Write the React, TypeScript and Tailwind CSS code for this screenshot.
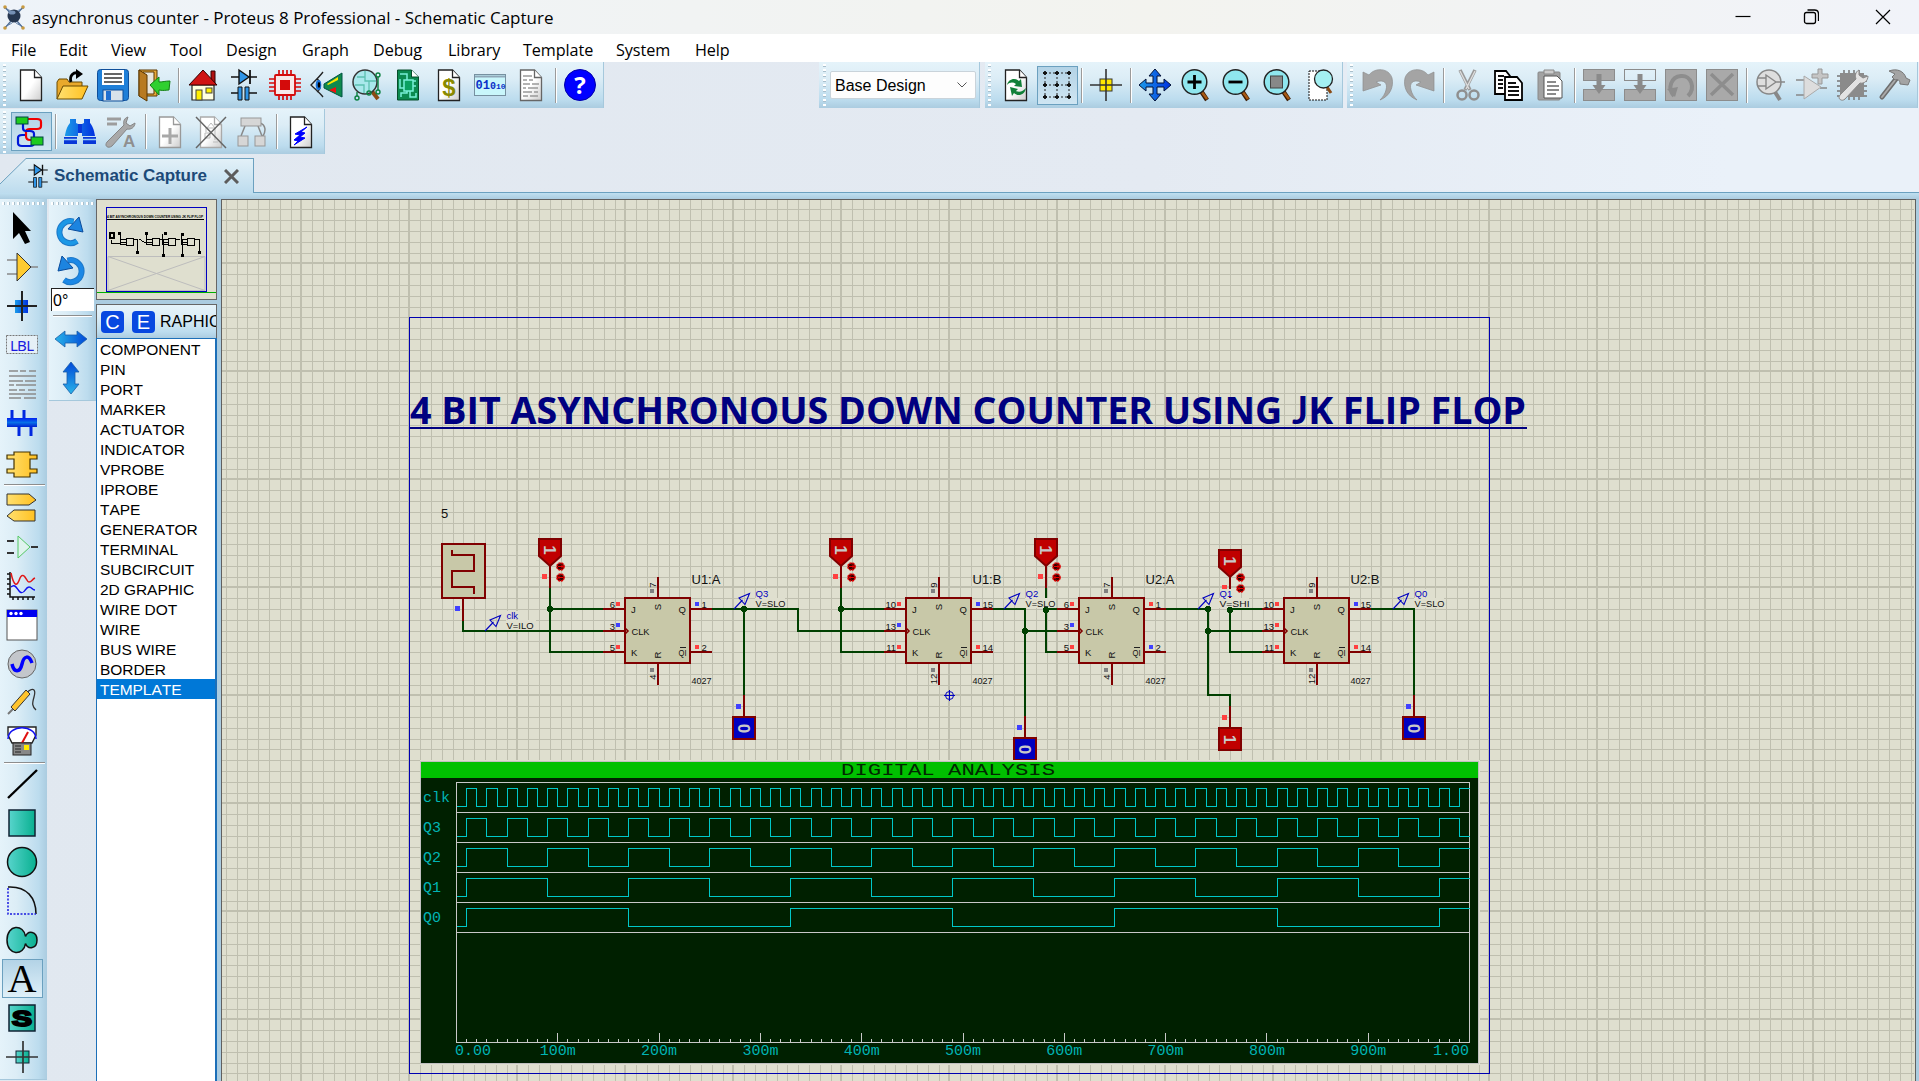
import React from "react";

type Kids = { children?: React.ReactNode };

const BAR = "bg-[linear-gradient(180deg,#e5f3fa_0%,#dcedf6_35%,#bcdcee_82%,#abcce0_100%)]";
const VBAR = "bg-[linear-gradient(90deg,#e5f3fa_0%,#dcedf6_35%,#bcdcee_82%,#abcce0_100%)]";

/* ---------- small building blocks ---------- */

const Svg = ({ children }: Kids) => (
  <svg viewBox="0 0 32 32" className="block h-8 w-8 shrink-0 overflow-visible">{children}</svg>
);

const Cell = ({ children, on }: Kids & { on?: boolean }) => (
  <div
    className={
      on
        ? "flex h-[39px] w-[41px] shrink-0 items-center justify-center border border-[#6ba0bf] bg-[linear-gradient(180deg,#b3d3e6,#cfe5f2)] pr-px"
        : "flex h-[39px] w-[41px] shrink-0 items-center justify-center pr-[2px]"
    }
  >
    {children}
  </div>
);

const Sep = () => (
  <div className="flex w-2 shrink-0 justify-center">
    <div className="h-[35px] w-[2px] border-l border-[#9b9b9b] bg-white" />
  </div>
);

const Grip = () => (
  <div className="h-[42px] w-[3px] shrink-0 self-center bg-[repeating-linear-gradient(180deg,#ffffff_0px,#ffffff_2px,#a9bfcc_2px,#a9bfcc_3px,transparent_3px,transparent_5px)]" />
);

const HGrip = () => (
  <div className="mx-[2px] h-[3px] bg-[repeating-linear-gradient(90deg,#ffffff_0px,#ffffff_2px,#a9bfcc_2px,#a9bfcc_3px,transparent_3px,transparent_5px)]" />
);

/* ---------- toolbar icons ---------- */

const Page = ({ children, c = "#222" }: Kids & { c?: string }) => (
  <>
    <path d="M5.500 1h14l7 7.500v23h-21z" fill="url(#paper)" stroke={c} strokeWidth="1.300" />
    <path d="M19.500 1v7.500h7" fill="#fff" stroke={c} strokeWidth="1.300" />
    {children}
  </>
);

const DocLines = () => (
  <path d="M8 7h9M8 11h4M14 11h4M8 15h7M17 15h7M8 19h3M13 19h10M8 23h9M19 23h4M8 27h5M15 27h8" stroke="#999" strokeWidth="1.600" />
);

const Open = () => (
  <Svg>
    <path d="M1 30V13l2-3h8l2 3h13v5" fill="#e9a92c" stroke="#6b4a00" />
    <path d="M1 30l6-13h25l-6 13z" fill="url(#gold)" stroke="#6b4a00" />
    <path d="M15 13c-2-7 3-10 7-9" fill="none" stroke="#000" strokeWidth="2.800" />
    <path d="M20 0l7 5-7 5z" />
  </Svg>
);
const Save = () => (
  <Svg>
    <rect x="0.500" y="0.500" width="31" height="31" rx="3" fill="#1f7fd8" stroke="#0f4f9a" />
    <rect x="5" y="1" width="22" height="15" fill="#fff" />
    <path d="M7 5h18M7 9h18M7 13h18" stroke="#333" strokeWidth="1.600" />
    <rect x="6" y="21" width="20" height="11" fill="#d8e2ea" stroke="#0f4f9a" />
    <rect x="9" y="22" width="5" height="9" fill="#1f6fd0" />
  </Svg>
);
const Exit = () => (
  <Svg>
    <path d="M1 1h18v26H1z" fill="#e6a93a" stroke="#5a3600" />
    <path d="M5 3h11v22H5z" fill="#e8e6dc" stroke="#5a3600" />
    <path d="M1 1l8 5v26l-8-5z" fill="#b87a20" stroke="#5a3600" />
    <path d="M12 16l9-8v5c4 0 6-1 11-1l-1 9c-3 0-5 1-10 0v5z" fill="#2fd02f" stroke="#138013" />
  </Svg>
);
const House = () => (
  <Svg>
    <path d="M24 2h4v13h-4z" fill="#b01010" stroke="#300" />
    <path d="M5 16h22v15H5z" fill="#ffffe0" stroke="#222" strokeWidth="1.200" />
    <path d="M16 1L2 16h28z" fill="#d01414" stroke="#300" />
    <rect x="9" y="21" width="6" height="10" fill="#ffef00" stroke="#444" />
    <rect x="19" y="19" width="6" height="5" fill="#ffef00" stroke="#444" />
  </Svg>
);
const DiodeShapes = () => (
  <>
    <path d="M3 8h26M3 24h9M20 24h9" stroke="#111" strokeWidth="1.600" />
    <path d="M11 1v14l10-7z" fill="#2f95e8" stroke="#111" strokeWidth="1.400" />
    <path d="M22 1v14" stroke="#111" strokeWidth="1.800" />
    <path d="M10 18h4v13h-4zM17 18h4v13h-4z" fill="#2f95e8" stroke="#111" />
  </>
);
const Chip = () => (
  <Svg>
    <path d="M10 1v30M14 1v30M18 1v30M22 1v30M0 10h32M0 14h32M0 18h32M0 22h32" stroke="#d40b0b" strokeWidth="1.700" />
    <rect x="6" y="6" width="20" height="20" rx="1" fill="#f6e9e9" stroke="#d40b0b" strokeWidth="1.800" />
    <rect x="11" y="11" width="10" height="10" fill="#d40b0b" />
  </Svg>
);
const Eye = () => (
  <Svg>
    <path d="M13 3C10 7 5 12 1 16c4 4 9 8 12 12M7 10c4 2 5 10 0 13" fill="none" stroke="#222" strokeWidth="1.300" />
    <ellipse cx="8.500" cy="16" rx="2.800" ry="5" fill="#1670d8" />
    <ellipse cx="9" cy="16" rx="1.300" ry="3" />
    <path d="M32 4v24L14 19v-4z" fill="#0f8a4d" stroke="#054" />
    <path d="M17 15l11-7v3l-10 5z" fill="#ffe600" />
    <path d="M19 21l7-3v6z" fill="#f01010" />
  </Svg>
);
const PcbSearch = () => (
  <Svg>
    <path d="M20 21l7 9" stroke="#8b4a14" strokeWidth="4" />
    <circle cx="14" cy="13" r="12" fill="#a9e8ec" stroke="#333" strokeWidth="1.500" />
    <path d="M14 2v10h11M4 16h9v8M18 12v10M6 8h8" fill="none" stroke="#5cc0b0" strokeWidth="1.300" />
    <g fill="none" stroke="#0b8040" strokeWidth="1.400">
      <circle cx="27" cy="6" r="2" /><circle cx="6" cy="29" r="2" /><circle cx="18" cy="24" r="2" /><circle cx="27" cy="23" r="2" />
      <path d="M27 8v13M6 27v-4" />
    </g>
  </Svg>
);
const PcbPage = () => (
  <Svg>
    <path d="M5.500 1h14l7 7v23h-21z" fill="#0b8a50" stroke="#064d2b" />
    <path d="M19.500 1v7h7" fill="#fff" stroke="#064d2b" />
    <g fill="none" stroke="#7af0d8" strokeWidth="1.500">
      <rect x="12" y="11" width="9" height="11" fill="#0aa060" />
      <path d="M8 5h7v6M8 10v9h4M24 12h-3M24 17h-3M9 28v-4h6v-2M18 22v6h6v-4" />
    </g>
  </Svg>
);
const Binary = () => (
  <Svg>
    <rect x="0.500" y="5.500" width="31" height="21" fill="#c9f6fb" stroke="#7790a0" />
    <path d="M1 7.500h30" stroke="#8fa7b8" strokeWidth="2" />
    <text x="1.500" y="20" className="fill-[#0a30c8] font-['Liberation_Mono'] text-[12px] font-bold">01</text>
    <text x="16" y="20" className="fill-[#0a30c8] font-['Liberation_Mono'] text-[10px] font-bold">0</text>
    <text x="22" y="20" className="fill-[#0a30c8] font-['Liberation_Mono'] text-[8px] font-bold">10</text>
  </Svg>
);
const Help = () => (
  <Svg>
    <circle cx="16" cy="16" r="15.500" fill="#0000ff" stroke="#0000a8" />
    <text x="16" y="24.500" textAnchor="middle" className="fill-white font-['Open_Sans'] text-[24px] font-bold">?</text>
  </Svg>
);
const NetIcon = () => (
  <Svg>
    <path d="M13 3h9c3 0 4 1 4 3v4c0 2-1 3-4 3h-7c-3 0-4 1-4 3v4c0 3 1 4 4 4h3" fill="none" stroke="#f00000" strokeWidth="2.200" />
    <path d="M8 8v4c0 2 1 3 3 3h4c3 0 4 1 4 3v9c0 2-1 3-4 3H7c-3 0-4-1-4-3v-5c0-2 1-3 4-3h3" fill="none" stroke="#0018d8" strokeWidth="2.200" />
    <rect x="1" y="1" width="12" height="7" fill="#1ecb1e" stroke="#044" />
    <rect x="16" y="21" width="12" height="8" fill="#1ecb1e" stroke="#044" />
  </Svg>
);
const Binoculars = () => (
  <Svg>
    <path d="M6 3h6v4l2 1v12H1v-1C2 13 4 9 6 7zM20 3h6v4c2 2 4 6 5 13H18V8l2-1z" fill="url(#blueH)" />
    <path d="M14 8h4v9h-4z" fill="#0837d8" />
    <path d="M0 21h13v7H0zM19 21h13v7H19z" fill="#0837d8" />
    <path d="M0 23.500h13M19 23.500h13" stroke="#9ad0f8" strokeWidth="1.500" />
  </Svg>
);
const WrenchA = () => (
  <Svg>
    <path d="M2 3h14M2 8h10" stroke="#9d9d9d" strokeWidth="3" />
    <path d="M23 1c-4 1-5 5-4 8L2 26c-3 4 1 7 5 4L22 13c4 1 8-2 8-6l-5 3-4-3z" fill="#a9a9a9" stroke="#858585" />
    <text x="18" y="31" className="fill-[#8f8f8f] font-['Liberation_Sans'] text-[17px] font-bold">A</text>
  </Svg>
);
const Hier = () => (
  <Svg>
    <path d="M9 10L5 20M22 10l4 10M24 7c6 2 6 8 3 13" fill="none" stroke="#888" strokeWidth="1.500" />
    <g fill="#d6d6d6" stroke="#979797"><rect x="5" y="2" width="20" height="8" /><rect x="2" y="20" width="10" height="10" /><rect x="19" y="20" width="10" height="10" /></g>
  </Svg>
);
const GridIcon = () => (
  <Svg>
    <path d="M4 4h24M4 16h24M4 28h24M4 4v24M16 4v24M28 4v24" stroke="#222" strokeDasharray="2 2" strokeWidth="1" />
    <path d="M2 4h4M14 4h4M26 4h4M2 16h4M14 16h4M26 16h4M2 28h4M14 28h4M26 28h4M4 2v4M16 2v4M28 2v4M4 14v4M16 14v4M28 14v4M4 26v4M16 26v4M28 26v4" stroke="#111" strokeWidth="1.800" />
  </Svg>
);
const Move = () => (
  <Svg>
    <path d="M16 0l6 7h-4v7h7v-4l7 6-7 6v-4h-7v7h4l-6 7-6-7h4v-7H7v4l-7-6 7-6v4h7V7h-4z" fill="url(#blueH)" stroke="#001038" />
  </Svg>
);
const Zoom = ({ children }: Kids) => (
  <Svg>
    <path d="M21 22l6 9" stroke="#3a1a00" strokeWidth="4.500" />
    <path d="M21 22l6 8" stroke="#a85a14" strokeWidth="2.500" />
    <circle cx="14.500" cy="13" r="12.300" fill="#8fe6ee" stroke="#222" strokeWidth="1.500" />
    {children}
  </Svg>
);
const Bars = ({ hollow }: { hollow?: boolean }) => (
  <Svg>
    <rect x="0.500" y="0.500" width="31" height="11" fill={hollow ? "none" : "#a9a9a9"} stroke="#8c8c8c" />
    <rect x="0.500" y="20.500" width="31" height="11" fill="#a9a9a9" stroke="#8c8c8c" />
    <path d="M13.500 5h5v11h4L16 25l-6.500-9h4z" fill="#8a8a8a" />
  </Svg>
);
const Block = ({ children }: Kids) => (
  <Svg>
    <rect x="0.500" y="0.500" width="31" height="31" fill="#a9a9a9" stroke="#8c8c8c" />
    {children}
  </Svg>
);
const UndoShape = () => <path d="M1 3v19l18-6-5-3c8-3 12 1 10 8-1 4-3 7-6 10C28 27 32 18 30 9 27-1 13-2 7 6z" fill="#a4a4a4" stroke="#8d8d8d" strokeWidth="0.700" />;

/* ---------- side icons ---------- */

const SideCell = ({ children, on }: Kids & { on?: boolean }) => (
  <div
    className={
      on
        ? "ml-[2px] flex h-[39px] w-[41px] items-center justify-center border border-[#6ba0bf] bg-[linear-gradient(180deg,#b3d3e6,#dff0f9)] pr-px"
        : "ml-[2px] flex h-[39px] w-[41px] items-center justify-center pr-[2px]"
    }
  >
    {children}
  </div>
);

const sideA = [
  <Svg key="0"><path d="M7 0v27l6-6 6 11 5-2-5-11h6z" fill="#000" /></Svg>,
  <Svg key="1"><path d="M1 9h10M1 23h10M25 16h7" stroke="#888" strokeWidth="1.600" /><path d="M11 2v28l14-14z" fill="#ffcb30" stroke="#333" /></Svg>,
  <Svg key="2"><rect x="9" y="10" width="13" height="13" fill="url(#blueH)" /><path d="M1 16h30M16 1v30" stroke="#222" strokeWidth="2" /></Svg>,
  <Svg key="3"><rect x="0.500" y="6.500" width="31" height="18" fill="#e6f0f6" stroke="#777" strokeDasharray="2 1" /><text x="16" y="21.500" textAnchor="middle" textLength="24" className="fill-[#1a1ae0] font-['Noto_Sans'] text-[15px]">LBL</text></Svg>,
  <Svg key="4"><path d="M3 3h9M14 3h6M23 3h7M3 8h27M3 13h14M19 13h11M3 17h5M10 17h20M3 22h8M13 22h6M22 22h8M3 26h27M3 30h12M18 30h12" stroke="#8b8b8b" strokeWidth="1.500" /></Svg>,
  <Svg key="5"><path d="M6 3v9M18 3v9M13 19v10M25 19v10" stroke="#0028e0" strokeWidth="3" /><rect x="1" y="11" width="30" height="9" fill="url(#blueV)" /></Svg>,
  <Svg key="6"><path d="M8 6h16v3h7v4h-7v10h7v4h-7v4H8v-4H1v-4h7V13H1V9h7z" fill="url(#gold)" stroke="#443200" strokeWidth="1.200" /></Svg>,
];
const sideB = [
  <Svg key="0"><path d="M1 2h22l7 6-7 5H1zM29 18H8l-7 6 7 5h21z" fill="url(#gold)" stroke="#333" /></Svg>,
  <Svg key="1"><path d="M1 10h7M1 22h7M25 16h7" stroke="#333" strokeWidth="1.800" /><path d="M12 5v22l12-11z" fill="#dff3ee" stroke="#54c864" /></Svg>,
  <Svg key="2"><path d="M4 2v25h25M1 4h3M1 9h3M1 14h3M1 19h3M1 24h3M7 27v3M12 27v3M17 27v3M22 27v3M27 27v3" fill="none" stroke="#111" strokeWidth="1.500" /><path d="M5 3c3 14 6 14 9 5 4-8 7 5 9 4 3 0 3-3 6-4" fill="none" stroke="#e01818" strokeWidth="1.500" /><path d="M5 17c4-4 6 2 9 5 5 3 5-5 9-5 3 0 3 3 6 3" fill="none" stroke="#1010f0" strokeWidth="1.500" /></Svg>,
  <Svg key="3"><rect x="1" y="1" width="30" height="30" fill="#fff" stroke="#555" /><path d="M1 1h30v7H1z" fill="#0000f0" /><g fill="#fff"><circle cx="5" cy="4.500" r="1.700" /><circle cx="10" cy="4.500" r="1.700" /><circle cx="15" cy="4.500" r="1.700" /></g></Svg>,
  <Svg key="4"><circle cx="16" cy="16" r="14" fill="#c3c6cb" stroke="#666" /><path d="M6 16c2 9 8 9 10 0s7-9 10-1" fill="none" stroke="#0000ff" strokeWidth="3.500" /></Svg>,
  <Svg key="5"><path d="M20 6c8-7 10-3 8 4s-2 9 2 13" fill="none" stroke="#333" strokeWidth="1.300" /><path d="M2 27l6-6" stroke="#777" strokeWidth="2" /><path d="M20 3l4 4L9 24l-4-4z" fill="#ffc42c" stroke="#333" /></Svg>,
  <Svg key="6"><path d="M2 1h28v8l-4 8H6L2 9z" fill="#fff" stroke="#222" strokeWidth="1.400" /><path d="M2 13c0-15 28-15 28 0" fill="none" stroke="#1010f0" strokeWidth="1.500" /><path d="M16 17l6-11" stroke="#e01010" strokeWidth="2" /><rect x="7" y="17" width="18" height="12" fill="#888" stroke="#222" /><path d="M9 20h6M9 23h6M9 26h6" stroke="#222" /><rect x="18" y="19" width="5" height="5" fill="#ffea00" /></Svg>,
];
const sideC = [
  <Svg key="0"><path d="M2 30L31 2" stroke="#000" strokeWidth="2.400" /></Svg>,
  <Svg key="1"><rect x="3" y="3" width="26" height="26" fill="url(#teal)" stroke="#123" strokeWidth="1.500" /></Svg>,
  <Svg key="2"><circle cx="16" cy="16" r="14.500" fill="url(#teal)" stroke="#111" strokeWidth="1.500" /></Svg>,
  <Svg key="3"><path d="M2 2c19-1 28 11 28 27" fill="none" stroke="#111" strokeWidth="1.500" /><path d="M2 3v26h28" fill="none" stroke="#1818e0" strokeWidth="1.500" strokeDasharray="2 1.500" /></Svg>,
  <Svg key="4"><path d="M19.500 12.500C18 0 1 0 1 16s17 16 18.500 3.500C22 26 31 25 31 16s-9-10-11.500-3.500z" fill="url(#teal)" stroke="#111" strokeWidth="1.500" /></Svg>,
  <Svg key="5"><text x="16" y="29" textAnchor="middle" textLength="29" lengthAdjust="spacingAndGlyphs" className="fill-black font-['Liberation_Serif'] text-[41px]">A</text></Svg>,
  <Svg key="6"><rect x="3" y="3" width="26" height="26" fill="url(#teal)" stroke="#123" strokeWidth="1.500" /><text x="16" y="24" textAnchor="middle" textLength="20" lengthAdjust="spacingAndGlyphs" className="fill-black stroke-black stroke-2 font-['Liberation_Sans'] text-[22px] font-bold">S</text></Svg>,
  <Svg key="7"><rect x="10" y="10" width="13" height="12" fill="url(#teal)" stroke="#123" /><path d="M0 16h32M17 0v32" stroke="#333" strokeWidth="1.700" /></Svg>,
];

/* ---------- schematic ---------- */

const RED = "#800000";
const GREEN = "#004000";
const ON = "#ff4040";
const OFF = "#4040ff";

const Wire = ({ p, c = GREEN }: { p: string; c?: string }) => (
  <polyline points={p} fill="none" stroke={c} strokeWidth="2" shapeRendering="crispEdges" />
);
const Dot = ({ x, y }: { x: number; y: number }) => (
  <path d={`M${x - 1.5} ${y - 2.5}h3l1 1v3l-1 1h-3l-1-1v-3z`} fill={GREEN} stroke={GREEN} shapeRendering="crispEdges" />
);
const Sq = ({ x, y, c, s = 4 }: { x: number; y: number; c: string; s?: number }) => (
  <rect x={x} y={y} width={s} height={s} fill={c} shapeRendering="crispEdges" />
);

const Small = ({ x, y, t, end, w }: { x: number; y: number; t: string; end?: boolean; w?: number }) => (
  <text x={x} y={y} textAnchor={end ? "end" : "start"} textLength={w} lengthAdjust="spacingAndGlyphs" className="fill-[#101010] font-['Liberation_Sans'] text-[9.500px]">{t}</text>
);
const Turned = ({ x, y, t }: { x: number; y: number; t: string }) => (
  <text transform={`translate(${x} ${y}) rotate(-90)`} y="3.300" textAnchor="middle" className="fill-[#101010] font-['Liberation_Sans'] text-[9.500px]">{t}</text>
);

type FF = { x: number; name: string; pins: string[]; states: string[] };
const Flip = ({ x, name, pins, states }: FF) => (
  <g>
    <Wire c={RED} p={`${x - 22},609 ${x},609`} />
    <Wire c={RED} p={`${x - 22},631 ${x},631`} />
    <Wire c={RED} p={`${x - 22},652 ${x},652`} />
    <Wire c={RED} p={`${x + 65},609 ${x + 87},609`} />
    <Wire c={RED} p={`${x + 65},652 ${x + 87},652`} />
    <Wire c={RED} p={`${x + 33},577 ${x + 33},685`} />
    <rect x={x} y="598" width="65" height="65" fill="#c8c8a8" stroke={RED} strokeWidth="2" shapeRendering="crispEdges" />
    <path d={`M${x} 628l3 3-3 3`} fill="none" stroke={RED} strokeWidth="1.600" />
    <Small x={x + 6} y={612.5} t="J" />
    <Small x={x + 6.5} y={635} t="CLK" w={18} />
    <Small x={x + 6} y={656} t="K" />
    <Small x={x + 53.5} y={612.5} t="Q" />
    <Small x={x + 53.5} y={656} t="QI" w={8} />
    <path d={`M${x + 55} 647.500h6`} stroke="#202020" />
    <Turned x={x + 33} y={607} t="S" />
    <Turned x={x + 33} y={655} t="R" />
    <Small end x={x - 10} y={607.5} t={pins[0]} />
    <Small end x={x - 10} y={629.5} t={pins[1]} />
    <Small end x={x - 10} y={650.5} t={pins[2]} />
    <Small x={x + 76.5} y={607.5} t={pins[3]} />
    <Small x={x + 76.5} y={650.5} t={pins[4]} />
    <Turned x={x + 28} y={585} t={pins[5]} />
    <Turned x={x + 28} y={pins[6] === "12" ? 679 : 677} t={pins[6]} />
    <Sq x={x - 9} y={602} c={states[0]} />
    <Sq x={x - 9} y={623} c={states[1]} />
    <Sq x={x - 9} y={645} c={states[2]} />
    <Sq x={x + 70} y={602} c={states[3]} />
    <Sq x={x + 70} y={645} c={states[4]} />
    <Sq x={x + 25} y={589} c="#808080" />
    <Sq x={x + 25} y={668} c="#808080" />
    <text x={x + 66.5} y="584" className="fill-[#101010] font-['Liberation_Sans'] text-[13px]">{name}</text>
    <Small x={x + 66.5} y={683.5} t="4027" w={20} />
  </g>
);

const Digit = ({ x, y, t }: { x: number; y: number; t: string }) => (
  <text transform={`translate(${x} ${y}) rotate(90)`} y="6" textAnchor="middle" className="fill-[#c8c8c8] font-['Liberation_Sans'] text-[17px] font-bold">{t}</text>
);

const Source = ({ x, y }: { x: number; y: number }) => (
  <g>
    <Wire c={RED} p={`${x},${y + 26} ${x},${y + 49}`} />
    <path d={`M${x - 11} ${y}h22v17l-11 10-11-10z`} fill="#c00000" stroke={RED} strokeWidth="2" />
    <Digit x={x} y={y + 11} t="1" />
    <Sq x={x - 8} y={y + 35} c={ON} s={5} />
    {[27, 38].map((d, i) => (
      <g key={d}>
        <circle cx={x + 10.5} cy={y + d + 0.5} r="3.600" fill="#300000" stroke="#e00000" strokeWidth="1.500" strokeDasharray="2.200 0.700" />
        <path d={i ? `M${x + 8} ${y + d + 0.5}h5m-3-2l-2 2 2 2` : `M${x + 8} ${y + d + 0.5}h5m-2-2l2 2-2 2`} fill="none" stroke="#f00000" strokeWidth="1" />
      </g>
    ))}
  </g>
);

const Sink = ({ x, y, v }: { x: number; y: number; v: string }) => (
  <g>
    <Wire c={RED} p={`${x},${y - 22} ${x},${y}`} />
    <rect x={x - 11} y={y} width="22" height="22" fill={v === "1" ? "#c00000" : "#0000c0"} stroke={RED} strokeWidth="2" shapeRendering="crispEdges" />
    <Digit x={x} y={y + 11.5} t={v} />
    <Sq x={x - 8} y={y - 13} c={v === "1" ? ON : OFF} s={5} />
  </g>
);

const Probe = ({ x, y, name, v }: { x: number; y: number; name: string; v: string }) => (
  <g>
    <rect x={x + 22} y={y - 20} width="14" height="8" fill="#dfdfcf" />
    <rect x={x + 21} y={y - 11} width="30" height="10" fill="#dfdfcf" />
    <path d={`M${x} ${y}l8.500-9M${x + 15.5} ${y - 15.5}l-10.500 4.500 6 6.500z`} fill="none" stroke="#0000c0" strokeWidth="1.100" />
    <text x={x + 21.5} y={y - 12.5} className="fill-[#0000c0] font-['Liberation_Sans'] text-[9.500px]">{name}</text>
    <Small x={x + 21.5} y={y - 2.5} t={v} w={name === "clk" ? 27 : 30} />
  </g>
);

const PLOT_X = 456.5;
const MS = 1.013;
const wave = (half: number, top: number) => {
  let d = `M${PLOT_X} ${top + 18}`;
  let high = false;
  for (let t = 10; t < 1000; t += half) {
    d += `H${Math.floor(PLOT_X + t * MS) + 0.5}`;
    high = !high;
    d += `V${high ? top : top + 18}`;
  }
  return d + "H1469.5";
};
const traces: [string, number][] = [["clk", 10], ["Q3", 20], ["Q2", 40], ["Q1", 80], ["Q0", 160]];

const Graph = () => (
  <g>
    <rect x="420" y="760" width="1060" height="305" fill="#dfdfcf" />
    <rect x="420.500" y="761.500" width="1058" height="302" fill="#002000" stroke="#c0c0c0" shapeRendering="crispEdges" />
    <rect x="421" y="762" width="1057" height="16" fill="#00c000" />
    <text x="841" y="774.500" textLength="214" lengthAdjust="spacingAndGlyphs" className="fill-[#002800] font-['Liberation_Mono'] text-[16px]">DIGITAL ANALYSIS</text>
    <g fill="none" shapeRendering="crispEdges">
      <rect x="456.500" y="782.500" width="1013" height="260" stroke="#c8c8c8" />
      {traces.map(([n], i) => <path key={n} d={`M456 ${812.5 + i * 30}H1469`} stroke="#c8c8c8" />)}
      {Array.from({ length: 99 }, (_, i) => i + 1).map((i) => (
        <path key={i} d={`M${Math.floor(PLOT_X + i * 10 * MS) + 0.5} ${i % 10 ? 1039 : 1033}V1042`} stroke="#c8c8c8" />
      ))}
      {traces.map(([n, half], i) => <path key={n} d={wave(half, 788.5 + i * 30)} stroke="#00c8c8" />)}
    </g>
    {traces.map(([n], i) => (
      <text key={n} x="423" y={801.5 + i * 30} className="fill-[#00b4b4] font-['Liberation_Mono'] text-[15px]">{n}</text>
    ))}
    {Array.from({ length: 11 }, (_, i) => i).map((i) => (
      <text
        key={i}
        x={i === 10 ? 1469 : i === 0 ? 455 : PLOT_X + i * 101.3}
        y="1055"
        textAnchor={i === 10 ? "end" : i === 0 ? "start" : "middle"}
        className="fill-[#00b4b4] font-['Liberation_Mono'] text-[15px]"
      >
        {i === 0 ? "0.00" : i === 10 ? "1.00" : `${i}00m`}
      </text>
    ))}
  </g>
);

const gridPath = () => {
  let thin = "";
  let thick = "";
  for (let k = -17; k < 140; k++) {
    const x = Math.ceil(409 + 10.8 * k - 0.001);
    if (k % 10 === 0) thick += `M${x} 200V1081`;
    else thin += `M${x + 0.5} 200V1081`;
  }
  for (let k = -15; k < 67; k++) {
    const y = Math.ceil(371 + 10.8 * k - 0.001);
    if (k % 10 === 0) thick += `M222 ${y}H1914`;
    else thin += `M222 ${y + 0.5}H1914`;
  }
  return { thin, thick };
};

const Schematic = () => {
  const { thin, thick } = gridPath();
  return (
    <svg width="1693" height="881" viewBox="222 200 1693 881" className="block shrink-0 bg-[#dfdfcf]">
      <path d={thin} stroke="#bfbfaf" shapeRendering="crispEdges" />
      <path d={thick} stroke="#bfbfaf" strokeWidth="2" shapeRendering="crispEdges" />
      <rect x="409.500" y="317.500" width="1080" height="756" fill="none" stroke="#0000b0" shapeRendering="crispEdges" />
      <text x="410" y="424" textLength="1116" lengthAdjust="spacingAndGlyphs" className="fill-[#000080] font-['Open_Sans','Noto_Sans'] text-[37.800px] font-bold">
        4 BIT ASYNCHRONOUS DOWN COUNTER USING <tspan className="font-['Lato']">J</tspan>K FLIP FLOP
      </text>
      <rect x="410" y="427" width="1117" height="2" fill="#000080" />
      <text x="441" y="518" className="fill-[#101010] font-['Liberation_Sans'] text-[13px]">5</text>

      <rect x="442" y="544" width="43" height="54" fill="#c8c8a8" stroke={RED} strokeWidth="2" />
      <Wire c={RED} p="452,550 452,555 474,555 474,571 452,571 452,587 474,587 474,594" />
      <Wire c={RED} p="463,599 463,621" />
      <Sq x={455} y={606} c={OFF} s={5} />
      <Wire p="463,621 463,631 604,631" />
      <Wire p="550,588 550,652 604,652" />
      <Wire p="550,609 604,609" />
      <Wire p="712,609 798,609 798,631 884,631" />
      <Wire p="744,609 744,696" />
      <Wire p="841,588 841,652 884,652" />
      <Wire p="841,609 884,609" />
      <Wire p="993,609 1025,609 1025,717" />
      <Wire p="1025,631 1057,631" />
      <Wire p="1046,588 1046,598" />
      <Wire p="1057,609 1046,609 1046,652 1057,652" />
      <Wire p="1165,609 1208,609 1208,695 1230,695 1230,706" />
      <Wire p="1208,631 1262,631" />
      <Wire p="1262,609 1230,609 1230,652 1262,652" />
      <Wire p="1370,609 1414,609 1414,695" />

      <Flip x={625} name="U1:A" pins={["6", "3", "5", "1", "2", "7", "4"]} states={[ON, OFF, ON, OFF, ON]} />
      <Flip x={906} name="U1:B" pins={["10", "13", "11", "15", "14", "9", "12"]} states={[ON, OFF, ON, OFF, ON]} />
      <Flip x={1079} name="U2:A" pins={["6", "3", "5", "1", "2", "7", "4"]} states={[ON, OFF, ON, ON, OFF]} />
      <Flip x={1284} name="U2:B" pins={["10", "13", "11", "15", "14", "9", "12"]} states={[ON, ON, ON, OFF, ON]} />

      <Source x={550} y={539} />
      <Source x={841} y={539} />
      <Source x={1046} y={539} />
      <Source x={1230} y={550} />
      <Sink x={744} y={717} v="0" />
      <Sink x={1025} y={738} v="0" />
      <Sink x={1230} y={728} v="1" />
      <Sink x={1414} y={717} v="0" />

      <Probe x={485} y={631} name="clk" v="V=ILO" />
      <Probe x={734} y={609} name="Q3" v="V=SLO" />
      <Probe x={1004} y={609} name="Q2" v="V=SLO" />
      <Probe x={1198} y={609} name="Q1" v="V=SHI" />
      <Probe x={1393} y={609} name="Q0" v="V=SLO" />

      <Dot x={550} y={609} />
      <Dot x={744} y={609} />
      <Dot x={841} y={609} />
      <Dot x={1025} y={631} />
      <Dot x={1046} y={610} />
      <Dot x={1208} y={609} />
      <Dot x={1208} y={631} />
      <Dot x={1230} y={610} />

      <path d="M944 695.500h11M949.500 690v11" stroke="#0000c0" />
      <circle cx="949.500" cy="695.500" r="4" fill="none" stroke="#0000c0" />
      <Graph />
    </svg>
  );
};

const Overview = () => (
  <svg viewBox="97 200 119 99" className="block h-[99px] w-[119px] bg-[#dfdfcf]">
    <path d="M108 256.500h97v34h-97zM108 256.500l97 34M205 256.500l-97 34" fill="none" stroke="#bdbdbd" />
    <rect x="106.500" y="207.500" width="100" height="84" fill="none" stroke="#0000c0" />
    <path d="M97 292.500h119" stroke="#00b000" />
    <path d="M107 219.500h97" stroke="#000" />
    <text x="107" y="218" textLength="96" lengthAdjust="spacingAndGlyphs" className="fill-black font-['Liberation_Sans'] text-[4px] font-bold">4 BIT ASYNCHRONOUS DOWN COUNTER USING JK FLIP FLOP</text>
    <g fill="none" stroke="#000" shapeRendering="crispEdges">
      <rect x="109.500" y="232.500" width="4" height="5" strokeWidth="2" />
      {[126, 152, 168, 187].map((x) => (
        <path key={x} d={`M${x}.5 238.5h7v7h-7zM${x - 6} 239.5h6M${x - 6} 242.5h6M${x - 6} 244.5h6M${x - 6}.5 234v11M${x + 7} 239.5h5`} />
      ))}
      <path d="M111 240v3h9M137.500 239v12M163.500 240v14M182.500 240v14M199.500 239v12M139 239l5 3h4" />
    </g>
    {[[118, 232], [145, 232], [164, 232], [181, 233], [136, 251], [162, 254], [181, 254], [198, 251]].map(([x, y]) => (
      <rect key={`${x}-${y}`} x={x} y={y} width="3" height="3" />
    ))}
  </svg>
);

const menus: [string, string][] = [
  ["File", "w-[48px]"], ["Edit", "w-[52px]"], ["View", "w-[59px]"], ["Tool", "w-[56px]"], ["Design", "w-[76px]"], ["Graph", "w-[71px]"],
  ["Debug", "w-[75px]"], ["Library", "w-[75px]"], ["Template", "w-[93px]"], ["System", "w-[79px]"], ["Help", "w-[60px]"],
];
const objects = ["COMPONENT", "PIN", "PORT", "MARKER", "ACTUATOR", "INDICATOR", "VPROBE", "IPROBE", "TAPE", "GENERATOR", "TERMINAL", "SUBCIRCUIT", "2D GRAPHIC", "WIRE DOT", "WIRE", "BUS WIRE", "BORDER", "TEMPLATE"];

const Defs = () => (
  <svg width="0" height="0" className="absolute">
    <defs>
      <linearGradient id="blueH"><stop offset="0" stopColor="#1b9be8" /><stop offset="1" stopColor="#0030e0" /></linearGradient>
      <linearGradient id="cyanH"><stop offset="0" stopColor="#2ab4e8" /><stop offset="1" stopColor="#0048d8" /></linearGradient>
      <linearGradient id="blueV" x2="0" y2="1"><stop offset="0" stopColor="#0020f0" /><stop offset="0.500" stopColor="#0870e8" /><stop offset="1" stopColor="#0020d0" /></linearGradient>
      <linearGradient id="gold"><stop offset="0" stopColor="#ffe070" /><stop offset="1" stopColor="#ffc020" /></linearGradient>
      <linearGradient id="teal"><stop offset="0" stopColor="#58d4cc" /><stop offset="1" stopColor="#08b090" /></linearGradient>
      <linearGradient id="paper" x2="1" y2="1"><stop offset="0.500" stopColor="#fff" /><stop offset="1" stopColor="#ccc" /></linearGradient>
    </defs>
  </svg>
);

const TitleBar = () => (
  <div className="flex h-[34px] shrink-0 items-center bg-[linear-gradient(90deg,#eef3f9_0%,#f3f3ef_60%,#f1f3f9_100%)]">
    <svg viewBox="0 0 24 28" className="ml-[2px] h-7 w-6">
      <path d="M3 4l18 21M21 4L3 25" stroke="#4a6a94" strokeWidth="1.200" />
      <path d="M2 5c7 3 8 3 9 5M22 5c-7 3-8 3-9 5M3 24c6-4 8-3 8-7M21 24c-6-4-8-3-8-7" fill="none" stroke="#5a7aa4" />
      <circle cx="12" cy="13" r="6.500" fill="#26364f" />
      <ellipse cx="10" cy="9.500" rx="3.500" ry="2" fill="#7690b4" />
      <g fill="#c89a40"><circle cx="3" cy="4" r="1.800" /><circle cx="21" cy="4" r="1.800" /><circle cx="3" cy="25" r="1.800" /><circle cx="21" cy="25" r="1.800" /></g>
    </svg>
    <span className="ml-[6px] mt-[2px] whitespace-nowrap font-['Open_Sans','Noto_Sans',sans-serif] text-[17px] tracking-[-0.020px] text-black">asynchronus counter - Proteus 8 Professional - Schematic Capture</span>
    <div className="ml-auto flex">
      <svg viewBox="0 0 16 16" className="mr-[52px] h-4 w-4"><path d="M0.500 7.500h15" stroke="#000" strokeWidth="1.200" /></svg>
      <svg viewBox="0 0 16 16" className="mr-[56px] h-4 w-4" fill="none" stroke="#000" strokeWidth="1.300"><rect x="1.500" y="3.500" width="11" height="11" rx="2" /><path d="M4.500 1h7q4 0 4 4v7" /></svg>
      <svg viewBox="0 0 16 16" className="mr-[28px] h-4 w-4"><path d="M1 1l14 14M15 1L1 15" stroke="#000" strokeWidth="1.200" /></svg>
    </div>
  </div>
);

export default function App() {
  return (
    <div className="flex h-[1081px] w-[1919px] flex-col overflow-hidden bg-[linear-gradient(90deg,#e1e8f0_0%,#e4eaf2_60%,#eaf1f9_90%)] font-['Liberation_Sans',Arial,sans-serif] text-black">
      <Defs />
      <TitleBar />
      <div className="flex h-7 shrink-0 items-center bg-white pl-[11px] font-['Open_Sans','Noto_Sans',sans-serif] text-[16.200px] tracking-[-0.080px]">
        {menus.map(([m, w]) => <span key={m} className={`${w} relative top-[2px]`}>{m}</span>)}
      </div>

      <div className="flex h-[46px] shrink-0">
        <div className={`flex w-[604px] items-center border-r border-[#a5c8dc] ${BAR}`}>
          <div className="flex w-[11px] shrink-0 pl-[3px]"><Grip /></div>
          <Cell><Svg><Page /></Svg></Cell>
          <Cell><Open /></Cell>
          <Cell><Save /></Cell>
          <Cell><Exit /></Cell>
          <Sep />
          <Cell><House /></Cell>
          <Cell><Svg><DiodeShapes /></Svg></Cell>
          <Cell><Chip /></Cell>
          <Cell><Eye /></Cell>
          <Cell><PcbSearch /></Cell>
          <Cell><PcbPage /></Cell>
          <Cell><Svg><Page><text x="16" y="27" textAnchor="middle" className="fill-[#8a8a00] font-['Liberation_Sans'] text-[24px] font-bold">$</text></Page></Svg></Cell>
          <Cell><Binary /></Cell>
          <Cell><Svg><Page c="#666"><DocLines /></Page></Svg></Cell>
          <Sep />
          <Cell><Help /></Cell>
        </div>

        <div className={`ml-[215px] flex w-[161px] items-center border-r border-[#a5c8dc] pl-[4px] ${BAR}`}>
          <Grip />
          <div className="ml-[4px] flex h-[28px] w-[146px] items-center justify-between rounded-[2px] border border-[#c9d3da] bg-[#fdfdfd] pl-[4px] pr-[8px] text-[16px]">
            <span className="pt-px">Base Design</span>
            <svg viewBox="0 0 10 6" className="h-[6px] w-[10px]"><path d="M0.500 0.500L5 5l4.500-4.500" fill="none" stroke="#555" /></svg>
          </div>
        </div>

        <div className={`ml-[5px] flex w-[358px] items-center border-r border-[#a5c8dc] ${BAR}`}>
          <div className="flex w-[11px] shrink-0 pl-[3px]"><Grip /></div>
          <Cell><Svg><Page><path d="M7 16c1-6 8-8 12-4l2-2 1 8-8-1 2-2c-3-2-6-2-9 1zM26 19c-1 7-8 9-12 5l-2 3-2-9 8 2-2 2c4 2 7 0 10-3z" fill="#108038" /></Page></Svg></Cell>
          <Cell on><GridIcon /></Cell>
          <Sep />
          <Cell><Svg><rect x="10" y="10" width="12" height="12" fill="#ffe800" stroke="#333" /><path d="M0 16h32M16 0v32" stroke="#333" strokeWidth="1.600" /></Svg></Cell>
          <Sep />
          <Cell><Move /></Cell>
          <Cell><Zoom><path d="M7.500 13h14M14.500 6v14" stroke="#000" strokeWidth="2.800" /></Zoom></Cell>
          <Cell><Zoom><path d="M7.500 13h14" stroke="#000" strokeWidth="2.800" /></Zoom></Cell>
          <Cell><Zoom><rect x="8.500" y="7" width="12" height="12" fill="#888" stroke="#444" /></Zoom></Cell>
          <Cell><Svg><path d="M6 2h18v29H6z" fill="#fff" stroke="#111" strokeDasharray="2 1" /><path d="M24 18l4 6" stroke="#8a4a14" strokeWidth="3" /><circle cx="20.500" cy="10" r="9" fill="#a4f0f2" stroke="#222" strokeWidth="1.300" /></Svg></Cell>
        </div>

        <div className={`ml-[4px] flex w-[571px] items-center border-r border-[#a5c8dc] ${BAR}`}>
          <div className="flex w-[11px] shrink-0 pl-[3px]"><Grip /></div>
          <Cell><Svg><UndoShape /></Svg></Cell>
          <Cell><Svg><g transform="matrix(-1 0 0 1 32 0)"><UndoShape /></g></Svg></Cell>
          <Sep />
          <Cell><Svg><path d="M8 1l10 20M23 1L13 21" stroke="#9a9a9a" strokeWidth="3.500" /><path d="M8 2l9 18M23 2l-9 18" stroke="#ddd" strokeWidth="1.300" /><g fill="none" stroke="#8f8f8f" strokeWidth="2.500"><circle cx="10" cy="26" r="4.500" /><circle cx="22" cy="26" r="4.500" /></g></Svg></Cell>
          <Cell><Svg><g fill="#fff" stroke="#000" strokeWidth="1.800"><path d="M2 2h11l4 5v18H2z" /><path d="M12 8h12l5 6v17H12z" /></g><path d="M5 7h6M5 11h5M5 15h5M5 19h5M15 14h8M15 18h11M15 22h11M15 26h11" stroke="#111" strokeWidth="1.800" /></Svg></Cell>
          <Cell><Svg><rect x="4" y="3" width="22" height="28" rx="1" fill="#a2a2a2" stroke="#888" /><path d="M10 1h10v4H10z" fill="#ccc" stroke="#888" /><path d="M10 7h13l5 5v17H10z" fill="#fff" stroke="#555" /><path d="M13 13h9M13 17h12M13 21h12M13 25h9" stroke="#666" strokeWidth="1.600" /></Svg></Cell>
          <Sep />
          <Cell><Bars /></Cell>
          <Cell><Bars hollow /></Cell>
          <Cell><Block><path d="M9 27c-7-8-3-19 7-20s15 12 7 20" fill="none" stroke="#8d8d8d" strokeWidth="4" /><path d="M2 20l11-2-3 10z" fill="#8d8d8d" /></Block></Cell>
          <Cell><Block><path d="M5 5l22 21M27 5L5 26" stroke="#8d8d8d" strokeWidth="3.500" /></Block></Cell>
          <Sep />
          <Cell><Svg><path d="M20 23l5 8" stroke="#888" strokeWidth="4" /><circle cx="14" cy="13" r="12" fill="#dedede" stroke="#888" strokeWidth="1.500" /><path d="M3 9h8M3 17h8M21 13h9M11 6v14l10-7z" fill="none" stroke="#888" strokeWidth="1.400" /></Svg></Cell>
          <Cell><Svg><path d="M0 11h8M0 26h8M24 19h7" stroke="#888" strokeWidth="1.600" /><path d="M8 7v23l17-12z" fill="#ddd" stroke="#aaa" /><path d="M22 0h4v5h6v4h-6v6h-4V9h-6V5h6z" fill="#c5c5c5" stroke="#999" /></Svg></Cell>
          <Cell><Svg><path d="M7 1v30M12 1v30M17 1v30M22 1v30M0 7h30M0 12h30M0 17h30M0 22h30M0 27h30" stroke="#777" strokeWidth="1.500" /><rect x="3" y="4" width="24" height="24" fill="#8b8b8b" /><path d="M22 1c-4 2-4 6-3 9L3 26c-3 4 2 7 5 4l15-16c4 1 8-2 8-7l-5 2-4-3z" fill="#e2e2e2" stroke="#888" /></Svg></Cell>
          <Cell><Svg><path d="M18 10L4 28" stroke="#6e6e6e" strokeWidth="5" strokeLinecap="round" /><path d="M18 10L4 28" stroke="#aaa" strokeWidth="2" strokeLinecap="round" /><path d="M11 2c8-3 15 0 17 7l4 2-2 5-8-1c0-4-2-5-5-4l-3-3 3-3z" fill="#a4a4a4" stroke="#777" /></Svg></Cell>
        </div>
      </div>

      <div className={`mt-px flex h-[45px] w-[325px] shrink-0 items-center border-r border-[#a5c8dc] ${BAR}`}>
        <div className="flex w-[11px] shrink-0 pl-[3px]"><Grip /></div>
        <Cell on><NetIcon /></Cell>
        <Sep />
        <Cell><Binoculars /></Cell>
        <Cell><WrenchA /></Cell>
        <Sep />
        <Cell><Svg><Page c="#999"><path d="M8 20h16M16 12v16" stroke="#a8a8a8" strokeWidth="3" /></Page></Svg></Cell>
        <Cell><Svg><Page c="#aaa"><path d="M12 12l4-5 4 5zM10 22h5v-5h-5zM18 26h5M11 16v-4M20 12v12" fill="none" stroke="#bbb" /></Page><path d="M1 1l30 31M31 1L1 32" stroke="#666" strokeWidth="1.500" /></Svg></Cell>
        <Cell><Hier /></Cell>
        <Sep />
        <Cell><Svg><Page><path d="M22 11l-12 7 5 1-6 5 4 1-4 4 11-7-5-1 5-4-4-1z" fill="#0000ff" stroke="#0000ff" /></Page></Svg></Cell>
      </div>

      <div className="mt-[4px] flex h-[35px] shrink-0">
        <svg viewBox="0 0 27 35" className="h-[35px] w-[27px] shrink-0">
          <defs><linearGradient id="tab" x2="0" y2="1"><stop offset="0" stopColor="#e3f1f8" /><stop offset="1" stopColor="#bddcee" /></linearGradient></defs>
          <path d="M0 26L26 0.500h1V35H0z" fill="url(#tab)" />
          <path d="M0 26L26 0.500h1" fill="none" stroke="#6ba0bf" />
        </svg>
        <div className="flex w-[227px] shrink-0 items-center border-r border-t border-[#6ba0bf] bg-[linear-gradient(180deg,#e3f1f8,#bddcee)]">
          <svg viewBox="3 0 26 32" className="ml-px h-6 w-[20px] overflow-visible"><DiodeShapes /></svg>
          <span className="ml-[6px] whitespace-nowrap text-[17px] font-bold tracking-[-0.070px] text-[#1d4a78]">Schematic Capture</span>
          <svg viewBox="0 0 15 15" className="ml-[17px] h-[15px] w-[15px]"><path d="M1 1l13 13M14 1L1 14" stroke="#5c5c5c" strokeWidth="3" /></svg>
        </div>
        <div className="flex-1 border-b border-[#6ba0bf]" />
      </div>
      <div className="h-[6px] shrink-0 bg-[linear-gradient(180deg,#bfdff0,#abcce0)]" />

      <div className="flex min-h-0 flex-1">
        <div className={`flex w-[47px] shrink-0 flex-col self-start border-b border-[#a5c8dc] pt-[3px] ${VBAR}`}>
          <HGrip />
          <div className="mt-[3px]">{sideA.map((s, i) => <SideCell key={i}>{s}</SideCell>)}</div>
          <div className="mb-[2px] ml-1 mr-[2px] mt-[3px] h-[2px] border-t border-[#8d8d8d] bg-white" />
          <div>{sideB.map((s, i) => <SideCell key={i}>{s}</SideCell>)}</div>
          <div className="ml-1 mr-[2px] mt-px h-[2px] border-t border-[#8d8d8d] bg-white" />
          <div>{sideC.map((s, i) => <SideCell key={i} on={i === 5}>{s}</SideCell>)}</div>
          <div className="h-[3px]" />
        </div>
        <div className="w-[49px] shrink-0">
          <div className={`ml-[2px] flex h-[202px] flex-col border-b border-[#a5c8dc] pt-[3px] ${VBAR}`}>
            <HGrip />
            <svg viewBox="0 0 32 32" className="ml-[5px] mt-[11px] h-8 w-8"><path d="M19.500 5.600A11 11 0 1 0 23 25" fill="none" stroke="#1d78c8" strokeWidth="6" /><path d="M19.500 5.600A11 11 0 1 0 23 25" fill="none" stroke="#1c98e6" strokeWidth="4" /><path d="M25 1l4 15-15-3z" fill="#1c84e0" stroke="#0a4c9c" /></svg>
            <svg viewBox="0 0 32 32" className="ml-[6px] mt-[7px] h-8 w-8"><path d="M12.500 5.600A11 11 0 1 1 9 25" fill="none" stroke="#1d78c8" strokeWidth="6" /><path d="M12.500 5.600A11 11 0 1 1 9 25" fill="none" stroke="#1c88e6" strokeWidth="4" /><path d="M7 1L3 16l15-3z" fill="#1c84e0" stroke="#0a4c9c" /></svg>
            <div className="ml-[2px] mt-[1px] h-[23px] w-[43px] border-l border-t border-[#222] bg-white pl-px pt-px text-[16px] leading-[22px]">0°</div>
            <div className="ml-[4px] mr-[4px] mt-[4px] h-[2px] border-t border-[#8d8d8d] bg-white" />
            <svg viewBox="0 0 32 32" className="ml-[6px] mt-[6px] h-8 w-8"><path d="M0 16l10-8v4h12V8l10 8-10 8v-4H10v4z" fill="url(#cyanH)" stroke="#1a5ea8" strokeWidth="0.800" /></svg>
            <svg viewBox="0 0 32 32" className="ml-[6px] mt-[7px] h-8 w-8"><path transform="rotate(-90 16 16)" d="M0 16l10-8v4h12V8l10 8-10 8v-4H10v4z" fill="url(#cyanH)" stroke="#1a5ea8" strokeWidth="0.800" /></svg>
          </div>
        </div>

        <div className="flex w-[121px] shrink-0 flex-col">
          <div className="border border-[#666]"><Overview /></div>
          <div className="h-[4px] shrink-0 bg-[#abcce0]" />
          <div className={`flex h-[34px] shrink-0 items-center overflow-hidden border-x border-t border-[#666] pl-[4px] ${BAR}`}>
            <div className="flex h-[22px] w-[23px] shrink-0 items-center justify-center rounded-[4px] bg-[#0848e0] text-[20px] text-white">C</div>
            <div className="ml-[8px] flex h-[22px] w-[23px] shrink-0 items-center justify-center rounded-[4px] bg-[#0848e0] text-[20px] text-white">E</div>
            <span className="ml-[5px] text-[16px]">RAPHICS</span>
          </div>
          <div className="flex-1 border-l border-r-2 border-t border-[#1c6fb8] bg-white text-[15.500px] tracking-[-0.050px] [font-kerning:none]">
            {objects.map((o) => (
              <div key={o} className={o === "TEMPLATE" ? "h-5 bg-[#0078d7] pl-[3px] leading-[21px] text-white" : "h-5 pl-[3px] leading-[21px]"}>{o}</div>
            ))}
          </div>
        </div>
        <div className="w-[4px] shrink-0 bg-[#abcce0]" />
        <div className="flex border-l border-r border-t border-[#606060]"><Schematic /></div>
        <div className="flex-1 bg-[#abcce0]" />
      </div>
    </div>
  );
}
